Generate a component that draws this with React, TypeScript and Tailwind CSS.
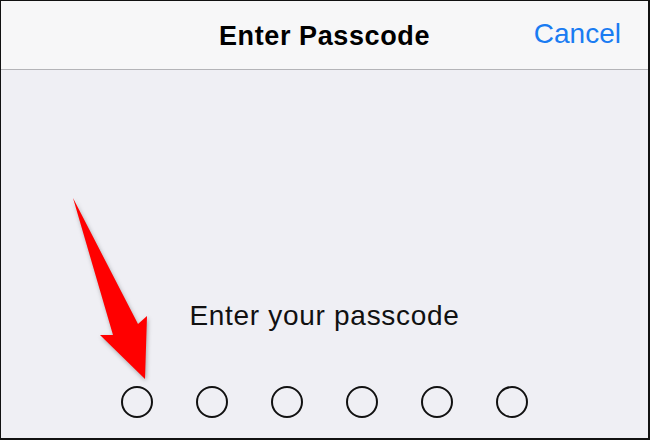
export default function App() {
  const slots = [0, 1, 2, 3, 4, 5]

  return (
    <div
      className="relative w-[650px] h-[440px] overflow-hidden bg-[#efeff4] border-l border-t border-r-2 border-b-2 border-[#111]"
      style={{ fontFamily: '"Liberation Sans", Arial, sans-serif' }}
    >
      {/* Nav bar */}
      <div className="relative h-[69px] bg-[#f7f7f8] border-b border-[#b4b4b8] flex items-center justify-center">
        <h1 className="text-[27px] font-bold tracking-[0.6px] text-black leading-[32px] mt-[1px]">Enter Passcode</h1>
        <button className="absolute right-[27px] top-[17px] text-[28px] leading-[32px] text-[#1a7cf2]">Cancel</button>
      </div>

      {/* Body */}
      <div className="flex flex-col items-center pt-[229px]">
        <p className="text-[28px] leading-[34px] tracking-[0.7px] text-[#111]">Enter your passcode</p>
        <div className="mt-[53px] flex gap-[43px]">
          {slots.map((i) => (
            <div key={i} className="w-[32px] h-[32px] rounded-full border-2 border-[#111]" />
          ))}
        </div>
      </div>

      {/* Annotation arrow */}
      <svg
        className="absolute inset-0 pointer-events-none"
        width="650"
        height="440"
        viewBox="0 0 650 440"
        style={{ filter: 'drop-shadow(1px 2px 2px rgba(0,0,0,0.3))' }}
      >
        <polygon points="72,197 137,323 146,315 144,378 99,334 112,334" fill="#ff0000" />
      </svg>
    </div>
  )
}
